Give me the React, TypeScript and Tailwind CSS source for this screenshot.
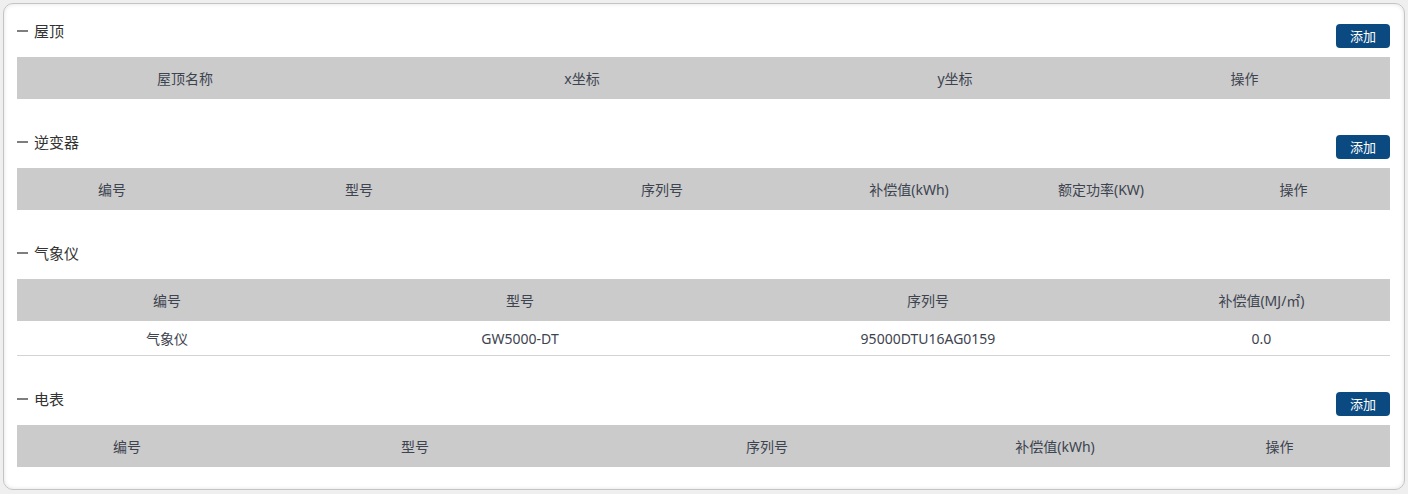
import React from "react";

type Section = {
  title: string;
  button: boolean;
  cols: string;
  headers: string[];
  rows?: string[][];
};

const sections: Section[] = [
  {
    title: "屋顶",
    button: true,
    cols: "grid-cols-[336px_458px_288px_1fr]",
    headers: ["屋顶名称", "x坐标", "y坐标", "操作"],
  },
  {
    title: "逆变器",
    button: true,
    cols: "grid-cols-[190px_304px_302px_192px_192px_1fr]",
    headers: ["编号", "型号", "序列号", "补偿值(kWh)", "额定功率(KW)", "操作"],
  },
  {
    title: "气象仪",
    button: false,
    cols: "grid-cols-[300px_406px_410px_1fr]",
    headers: ["编号", "型号", "序列号", "补偿值(MJ/㎡)"],
    rows: [["气象仪", "GW5000-DT", "95000DTU16AG0159", "0.0"]],
  },
  {
    title: "电表",
    button: true,
    cols: "grid-cols-[220px_356px_348px_228px_1fr]",
    headers: ["编号", "型号", "序列号", "补偿值(kWh)", "操作"],
  },
];

function SectionBlock({ s, first }: { s: Section; first: boolean }) {
  return (
    <div className={first ? "" : "mt-[27px]"}>
      <div className="flex h-[42px] items-start justify-between">
        <div className="mt-[6px] flex items-center leading-[20px]">
          <span className="mr-[6px] inline-block h-[2px] w-[11px] bg-[#7e7e7e]" />
          <span className="text-[15px] text-[#333]">{s.title}</span>
        </div>
        {s.button && (
          <button className="mt-[9px] h-6 w-[54px] rounded-[4px] bg-[#0a4a80] text-[13px] leading-6 text-white">
            添加
          </button>
        )}
      </div>
      <div className={`grid ${s.cols} h-[42px] items-center bg-[#cbcbcb] text-[14px] text-[#3d4450]`}>
        {s.headers.map((h, i) => (
          <div key={i} className="text-center">
            {h}
          </div>
        ))}
      </div>
      {s.rows?.map((r, ri) => (
        <div
          key={ri}
          className={`grid ${s.cols} h-[35px] items-center border-b border-[#d4d4d4] text-[14px] text-[#3d4450]`}
        >
          {r.map((c, ci) => (
            <div key={ci} className="text-center">
              {c}
            </div>
          ))}
        </div>
      ))}
    </div>
  );
}

export default function App() {
  return (
    <div
      className="h-[494px] w-[1408px] bg-[#efefef] p-[3px]"
      style={{ fontFamily: '"Noto Sans", "Noto Sans CJK SC", sans-serif' }}
    >
      <div className="h-[487px] rounded-[10px] border border-[#c4c4c4] bg-white pl-[13px] pr-[14px] pt-[11px] shadow-[inset_0_0_4px_rgba(0,0,0,0.12)]">
        {sections.map((s, i) => (
          <SectionBlock key={i} s={s} first={i === 0} />
        ))}
      </div>
    </div>
  );
}
